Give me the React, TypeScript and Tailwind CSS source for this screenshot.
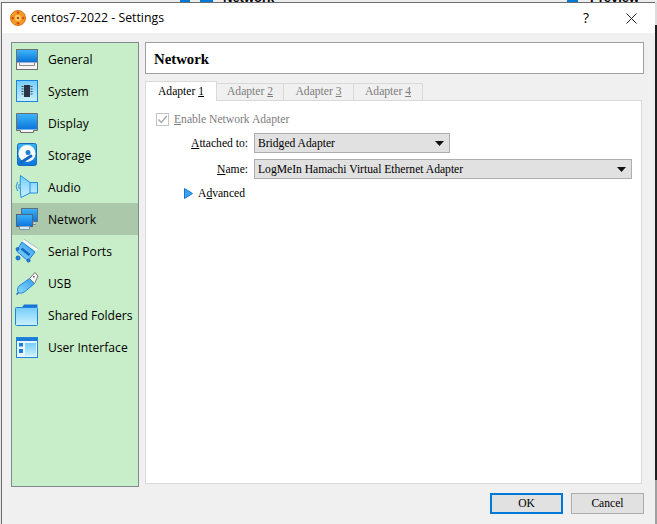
import React from "react";

const Sky = ({ id }: { id: string }) => (
  <defs>
    <linearGradient id={id} x1="0" y1="0" x2="0" y2="1">
      <stop offset="0" stopColor="#3db4f7" />
      <stop offset="1" stopColor="#0a74dc" />
    </linearGradient>
    <linearGradient id={id + "l"} x1="0" y1="0" x2="0" y2="1">
      <stop offset="0" stopColor="#74cdfa" />
      <stop offset="1" stopColor="#cdf0ff" />
    </linearGradient>
    <linearGradient id={id + "m"} x1="1" y1="0" x2="0" y2="1">
      <stop offset="0" stopColor="#2f9df0" />
      <stop offset="1" stopColor="#8edafc" />
    </linearGradient>
  </defs>
);

const I = ({ children }: { children: React.ReactNode }) => (
  <svg width="24" height="24" viewBox="0 0 24 24" className="shrink-0">
    {children}
  </svg>
);

const icons: Record<string, React.ReactNode> = {
  General: (
    <I>
      <Sky id="g1" />
      <rect x="1.5" y="2.5" width="21" height="20" fill="#f4f4f4" stroke="#6f6f6f" />
      <rect x="2" y="3" width="20" height="12" fill="url(#g1)" />
      <path d="M2 15h20" stroke="#2a6fb5" />
      <path d="M4.5 15.5v3h15v-3" fill="none" stroke="#8a8a8a" />
    </I>
  ),
  System: (
    <I>
      <Sky id="g2" />
      <rect x="1.5" y="1.5" width="21" height="21" fill="url(#g2l)" stroke="#1b83e0" />
      <rect x="9" y="6" width="6" height="12" fill="#2b3442" />
      <path d="M6.5 7.5h2M6.5 10h2M6.5 12.5h2M6.5 15h2M15.5 7.5h2M15.5 10h2M15.5 12.5h2M15.5 15h2" stroke="#3c4656" />
    </I>
  ),
  Display: (
    <I>
      <Sky id="g3" />
      <path d="M1.5 2.5h21v17h-4v2h-13v-2h-4z" fill="#f4f4f4" stroke="#6f6f6f" />
      <rect x="2" y="3" width="20" height="15.5" fill="url(#g3)" />
    </I>
  ),
  Storage: (
    <I>
      <Sky id="g4" />
      <rect x="2.5" y="0.5" width="19" height="22" rx="2" fill="url(#g4)" stroke="#1668c0" />
      <circle cx="12" cy="10.5" r="8.5" fill="#fff" />
      <circle cx="13" cy="9.5" r="2.5" fill="#1d7fdc" />
      <path d="M16 13 6 19.5" stroke="#1668c0" strokeWidth="3" strokeLinecap="round" />
    </I>
  ),
  Audio: (
    <I>
      <Sky id="g5" />
      <path d="M5.5 .5 15 7.500h7.500v10.500H15l-9 4.500c-1-7-1-15-.5-22z" fill="url(#g5l)" stroke="#1f8fe8" strokeLinejoin="round" />
      <path d="M15 7.500v10.500" stroke="#1f8fe8" />
      <path d="M2.500 7a9 9 0 0 0 0 9M4.300 9a5 5 0 0 0 0 5" fill="none" stroke="#2a93e5" />
    </I>
  ),
  Network: (
    <I>
      <Sky id="g6" />
      <rect x="6.5" y="1.5" width="16" height="13" fill="url(#g6)" stroke="#5e6f80" />
      <path d="M18 14.5v3h3" fill="#dfe9f2" stroke="#7b8b99" />
      <rect x="1.5" y="7.5" width="16" height="12" fill="url(#g6)" stroke="#4f6478" />
      <path d="M4.5 19.5v3h10v-3" fill="#d3e8f7" stroke="#7b97ae" />
    </I>
  ),
  "Serial Ports": (
    <I>
      <Sky id="g7" />
      <path d="M7 3 20 13 13 22 1.500 12z" fill="url(#g7m)" stroke="#1f7fdc" strokeLinejoin="round" />
      <path d="M8.500 1.500 22.500 11" stroke="#f7fcff" strokeWidth="3" />
      <path d="M9 .3 23.300 9.800" stroke="#9aa8b5" strokeWidth="0.8" />
      <path d="M6.500 9.500 14.500 16" stroke="#1668c0" strokeWidth="2.500" />
      <circle cx="3" cy="19" r="2" fill="#2287e3" stroke="#1668c0" />
      <circle cx="13.500" cy="21.500" r="1.600" fill="#2287e3" stroke="#1668c0" />
      <circle cx="2.500" cy="10" r="1.400" fill="#2287e3" stroke="#1668c0" />
    </I>
  ),
  USB: (
    <I>
      <Sky id="g8" />
      <path d="M14.500 7.500 19.500 12.500 10 20.500C7.500 22.500 4.500 22.500 3.500 21.500 2 20 2.300 17 4 15z" fill="url(#g8m)" stroke="#1f85e0" strokeLinejoin="round" />
      <path d="M14.500 7.500 20 1.500 23 5 19.500 12.500z" fill="#f7f7f7" stroke="#7a7a7a" strokeLinejoin="round" />
      <rect x="18" y="5" width="1.500" height="1.500" fill="#555" />
      <path d="M3.500 21.500 1.500 23.500" stroke="#1668c0" strokeWidth="1.500" />
    </I>
  ),
  "Shared Folders": (
    <I>
      <Sky id="g9" />
      <path d="M9 1.500h13.500v3H7z" fill="#1574d4" />
      <rect x="0.500" y="4.500" width="22" height="18" rx="1" fill="url(#g9l)" stroke="#1f85dc" />
    </I>
  ),
  "User Interface": (
    <I>
      <Sky id="g10" />
      <rect x="1.500" y="2.500" width="21" height="20" fill="#e8f7ff" stroke="#1f85dc" />
      <rect x="2" y="3" width="20" height="3" fill="#1a7cd8" />
      <rect x="4" y="8" width="4" height="3.500" fill="#1a7cd8" />
      <rect x="4" y="14" width="4" height="4" fill="#1a7cd8" />
      <rect x="10" y="8" width="11" height="13" fill="url(#g10l)" />
    </I>
  ),
};

const items = Object.keys(icons);

const Arrow = () => (
  <svg width="9" height="5" viewBox="0 0 9 5" className="shrink-0">
    <path d="M0 0h9L4.500 5z" fill="#111" />
  </svg>
);

const Combo = ({ text, className }: { text: string; className: string }) => (
  <div className={`flex h-5 items-center justify-between border border-[#adadad] bg-[#e1e1e1] pl-[3px] pr-[5px] ${className}`}>
    <span className="pt-[2px]">{text}</span>
    <Arrow />
  </div>
);

export default function App() {
  return (
    <div className="flex h-[524px] w-[657px] flex-col overflow-hidden bg-[#ececec] font-['Liberation_Serif',serif] text-[11.600px] leading-none text-black">
      <div className="flex h-[2px] shrink-0 items-end overflow-hidden bg-[#ececec] font-['Liberation_Sans',sans-serif] text-[13px] font-bold leading-[12px]">
        <div className="ml-[180px] h-[2px] w-[10px] shrink-0 bg-[#0078d7]" />
        <div className="ml-[10px] h-[2px] w-[13px] shrink-0 bg-[#0078d7]" />
        <span className="-mb-[2px] ml-[10px] w-[50px] shrink-0">Network</span>
        <div className="ml-[294px] h-[2px] w-[11px] shrink-0 bg-[#0078d7]" />
        <span className="-mb-[2px] ml-[12px] shrink-0">Preview</span>
      </div>
      <div className="flex min-h-0 flex-1">
        <div className="w-px shrink-0 bg-[#e4e4e4]" />
        <div className="flex w-[654px] shrink-0 flex-col border-l border-t border-[#6e6e6e] bg-[#f0f0f0]">
          <div className="flex h-[30px] shrink-0 items-center bg-white pl-[8px] font-['Open_Sans',sans-serif] text-[12.300px]">
            <svg width="16" height="16" viewBox="0 0 16 16" className="shrink-0">
              <circle cx="8" cy="8" r="7.500" fill="#f39a22" stroke="#d9701a" />
              <circle cx="8" cy="8" r="3" fill="#fbd26a" />
              <circle cx="8" cy="8" r="1.300" fill="#c2451a" />
              <circle cx="8" cy="2.800" r="1.200" fill="#d5441c" />
              <circle cx="8" cy="13.200" r="1.200" fill="#d5441c" />
              <circle cx="2.800" cy="8" r="1.200" fill="#d5441c" />
              <circle cx="13.200" cy="8" r="1.200" fill="#d5441c" />
            </svg>
            <span className="ml-[5px]">centos7-2022 - Settings</span>
            <span className="ml-auto text-[14px]">?</span>
            <svg width="11" height="11" viewBox="0 0 11 11" className="ml-[37px] mr-[18px]">
              <path d="M.5.5l10 10M10.500.5l-10 10" stroke="#222" fill="none" />
            </svg>
          </div>
          <div className="flex flex-1 flex-col pl-[9px] pr-[11px] pt-[9px]">
            <div className="flex h-[445px] shrink-0 gap-[6px]">
              <nav className="w-[128px] shrink-0 border border-[#828790] bg-[#c8edc9] font-['Open_Sans',sans-serif] text-[12.100px]">
                {items.map((n) => (
                  <div key={n} className={`flex h-8 items-center pl-[3px] ${n === "Network" ? "bg-[#abc8ab]" : ""}`}>
                    {icons[n]}
                    <span className="ml-[9px] whitespace-nowrap pt-[2px]">{n}</span>
                  </div>
                ))}
              </nav>
              <div className="flex min-w-0 flex-1 flex-col pb-[3px]">
                <div className="flex h-8 shrink-0 items-center border border-[#a0a0a0] bg-white pl-2 pt-[2px] text-[14.800px] font-bold">
                  Network
                </div>
                <div className="mr-[2px] mt-[7px] flex min-h-0 flex-1 flex-col">
                  <div className="relative z-10 -mb-px flex h-5 shrink-0 items-end">
                    <div className="flex h-5 w-[72px] justify-center border border-b-0 border-[#d9d9d9] bg-white pt-[4px]">
                      <span>Adapter <u>1</u></span>
                    </div>
                    {["2", "3", "4"].map((k, i) => (
                      <div key={k} className={`flex h-[18px] items-center justify-center border border-l-0 border-[#d9d9d9] bg-[#f0f0f0] text-[#7d7d7d] ${i === 0 ? "w-[67px]" : i === 1 ? "w-[70px]" : "w-[69px]"}`}>
                        <span>Adapter <u>{k}</u></span>
                      </div>
                    ))}
                  </div>
                  <div className="min-h-0 flex-1 border border-[#d9d9d9] bg-white pl-[10px] pt-[12px]">
                    <div className="flex h-[13px] items-center text-[#7d7d7d]">
                      <div className="flex h-[13px] w-[13px] items-center justify-center border border-[#c4c4c4]">
                        <svg width="11" height="11" viewBox="0 0 11 11">
                          <path d="M1.500 5.500 4.300 8.500 9.800 2" fill="none" stroke="#a8a8a8" strokeWidth="1.400" />
                        </svg>
                      </div>
                      <span className="ml-[5px]"><u>E</u>nable Network Adapter</span>
                    </div>
                    <div className="mt-[7px] flex items-center">
                      <span className="w-[92px] pt-[2px] text-right"><u>A</u>ttached to:</span>
                      <Combo text="Bridged Adapter" className="ml-[6px] w-[196px]" />
                    </div>
                    <div className="mt-[6px] flex items-center">
                      <span className="w-[92px] pt-[2px] text-right"><u>N</u>ame:</span>
                      <Combo text="LogMeIn Hamachi Virtual Ethernet Adapter" className="ml-[6px] w-[378px]" />
                    </div>
                    <div className="ml-[28px] mt-[8px] flex h-[13px] items-center">
                      <svg width="9" height="11" viewBox="0 0 9 11">
                        <path d="M.5.5 8.500 5.500.5 10.500z" fill="#38a4f2" stroke="#1b74d0" />
                      </svg>
                      <span className="ml-[5px]">A<u>d</u>vanced</span>
                    </div>
                  </div>
                </div>
              </div>
            </div>
            <div className="mt-[6px] flex justify-end gap-2">
              <div className="flex h-[21px] w-[73px] items-center justify-center border-2 border-[#0078d7] bg-[#e1e1e1]">OK</div>
              <div className="flex h-[21px] w-[73px] items-center justify-center border border-[#adadad] bg-[#e1e1e1]">Cancel</div>
            </div>
          </div>
        </div>
        <div className="flex w-[2px] shrink-0 flex-col">
          <div className="h-[23px] bg-[#dcdcdc]" />
          <div className="flex-1 bg-[#1e1e1e]" />
          <div className="h-[44px] bg-[#a0a0a0]" />
        </div>
      </div>
    </div>
  );
}
